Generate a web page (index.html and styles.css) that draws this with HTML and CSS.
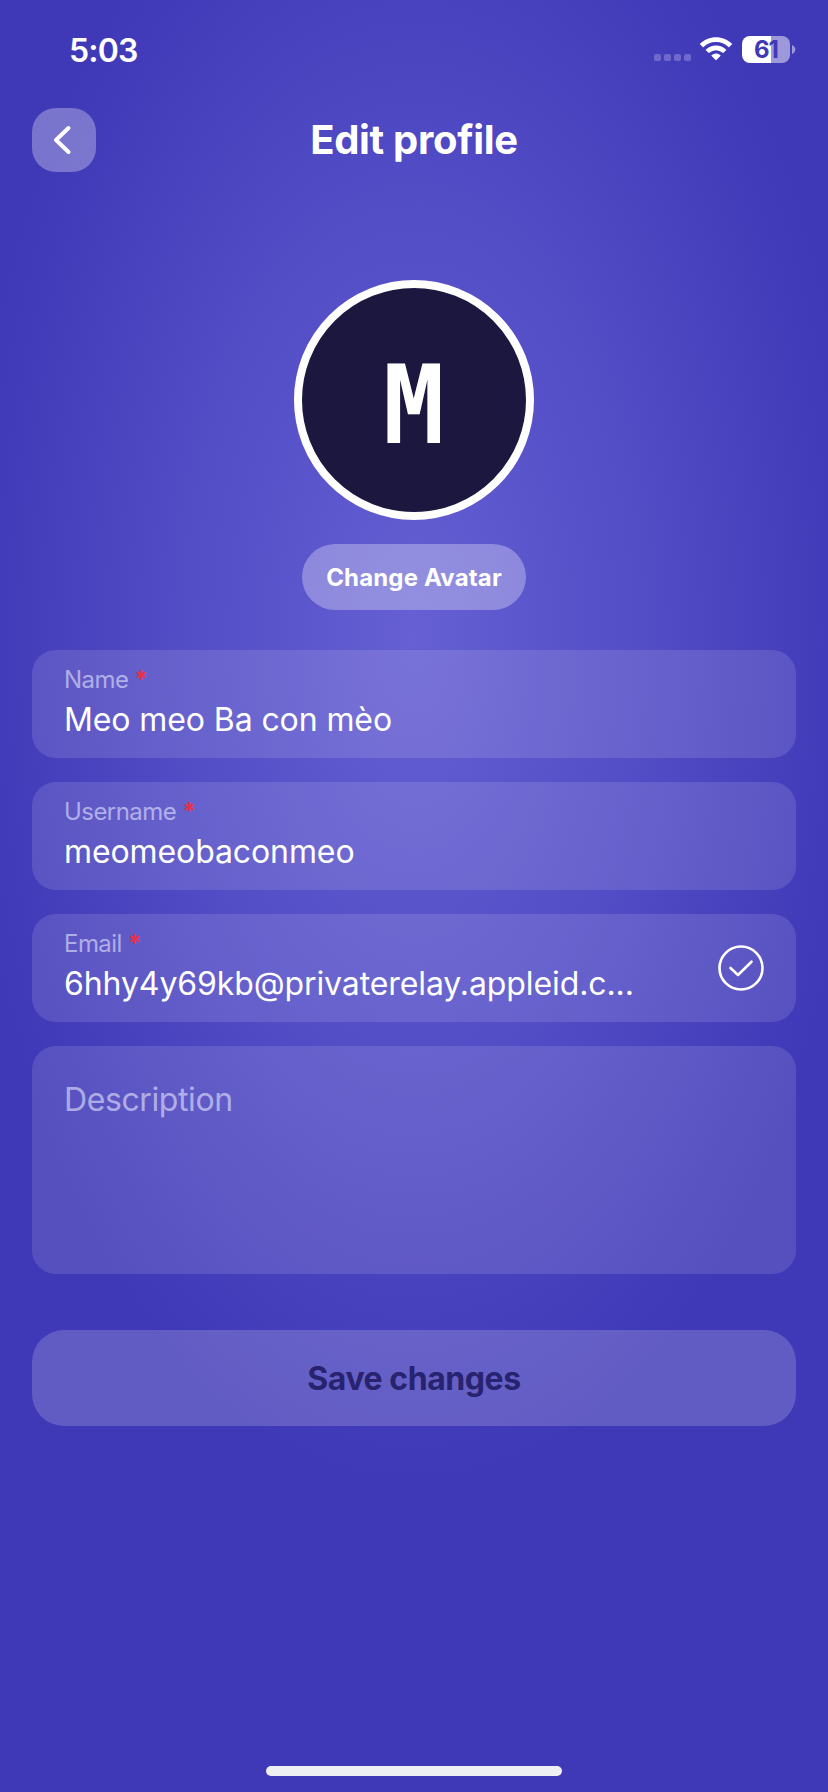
FILE: index.html
```html
<!DOCTYPE html>
<html lang="en">
<head>
<meta charset="utf-8">
<title>Edit profile</title>
<link rel="stylesheet" href="styles.css">
</head>
<body>
<div class="screen">
  <div class="status">
    <div class="time">5:03</div>
    <div class="status-icons">
      <div class="cell"><i></i><i></i><i></i><i></i></div>
      <svg class="wifi" width="32" height="24" viewBox="0 0 32 24">
        <path fill="#fff" d="M16 .3c6 0 11.600 2.300 15.800 6.300.2.3.2.6 0 .9l-2.500 2.400c-.2.3-.6.3-.9 0A18 18 0 0 0 16 5.100 18 18 0 0 0 3.600 9.900c-.3.3-.7.3-.9 0L.2 7.500a.6.6 0 0 1 0-.9C4.400 2.600 10 .3 16 .3Z"/>
        <path fill="#fff" d="M16 8.500c3.900 0 7.400 1.500 10 3.900.3.300.3.600 0 .9l-2.500 2.500c-.2.200-.6.200-.9 0A10 10 0 0 0 16 13.300a10 10 0 0 0-6.600 2.500c-.3.200-.6.200-.9 0L6 13.300a.6.6 0 0 1 0-.9 14.600 14.600 0 0 1 10-3.900Z"/>
        <path fill="#fff" d="M16 16.600c1.700 0 3.200.6 4.400 1.600.3.200.3.600 0 .9l-4 4c-.2.300-.6.300-.8 0l-4-4c-.3-.3-.3-.7 0-.9a6.700 6.700 0 0 1 4.400-1.600Z"/>
      </svg>
      <div class="battery"><span>61</span></div>
      <svg class="nub" width="4" height="9" viewBox="0 0 4 9"><path fill="#9c98d9" d="M0 0c2 .6 3.300 2.400 3.300 4.500S2 8.400 0 9Z"/></svg>
    </div>
  </div>
  <header class="header">
    <button class="back" aria-label="Back">
      <svg width="64" height="64" viewBox="0 0 64 64" fill="none" stroke="#fff" stroke-width="4" stroke-linecap="round" stroke-linejoin="round"><path d="M36.500 20 24 32l12.500 12"/></svg>
    </button>
    <h1 class="title">Edit profile</h1>
  </header>
  <main class="content">
    <div class="avatar"><span>M</span></div>
    <button class="change">Change Avatar</button>
    <div class="field">
      <div class="label">Name <b>*</b></div>
      <div class="value">Meo meo Ba con mèo</div>
    </div>
    <div class="field">
      <div class="label">Username <b>*</b></div>
      <div class="value">meomeobaconmeo</div>
    </div>
    <div class="field with-icon">
      <div>
        <div class="label">Email <b>*</b></div>
        <div class="value">6hhy4y69kb@privaterelay.appleid.c...</div>
      </div>
      <svg class="check" width="46" height="46" viewBox="0 0 46 46" fill="none" stroke="#fff" stroke-width="2.600" stroke-linecap="round" stroke-linejoin="round"><circle cx="23" cy="23" r="21.500"/><path d="m12.500 23 7.500 7 13.500-13.300"/></svg>
    </div>
    <div class="field area"><div class="placeholder">Description</div></div>
    <button class="save">Save changes</button>
  </main>
  <div class="home"></div>
</div>
</body>
</html>
```
FILE: styles.css
```css
* { box-sizing: border-box; }
body { margin: 0; font-family: Inter, "Liberation Sans", sans-serif; color: #fff; }
button { border: 0; padding: 0; margin: 0; font: inherit; color: inherit; }
.screen {
  width: 828px; height: 1792px; display: flex; flex-direction: column; overflow: hidden;
  background: radial-gradient(ellipse 455px 850px at 414px 640px, #6660d4 0%, #534dc6 50%, #3f38b7 100%);
}
.status { height: 100px; padding: 0 33px 0 69px; display: flex; justify-content: space-between; align-items: center; }
.time { font-size: 32px; font-weight: 600; line-height: 40px; letter-spacing: -.8px; padding-top: 1px; }
.status-icons { display: flex; align-items: center; margin: -2px -1px 0 0; }
.cell { display: flex; gap: 3px; margin: 16px 9px 0 0; }
.cell i { width: 7px; height: 7px; border-radius: 2px; background: #6f69cb; }
.battery {
  width: 48px; height: 27px; margin: 0 2px 0 10px; border-radius: 8px;
  background: linear-gradient(90deg, #fff 29px, #9c98d9 29px);
  color: #4039b7; font-size: 24px; font-weight: 700; line-height: 27px; text-align: center; letter-spacing: -1px;
}
.header { height: 80px; padding: 0 32px; display: grid; grid-template-columns: 64px 1fr 64px; align-items: center; }
.back { width: 64px; height: 64px; border-radius: 24px; background: rgba(255,255,255,.3); }
.back svg { display: block; }
.title { margin: 0; font-size: 40px; line-height: 48px; font-weight: 700; text-align: center; letter-spacing: -.3px; }
.content { padding: 100px 32px 0; display: flex; flex-direction: column; align-items: center; }
.avatar {
  width: 240px; height: 240px; border: 8px solid #fff; border-radius: 50%; background: #1b173e;
  display: flex; align-items: center; justify-content: center;
  font: 700 109px/1 "DejaVu Sans Mono", monospace;
}
.avatar span { padding-top: 10px; transform: scaleX(.93); }
.change { width: 224px; height: 66px; margin: 24px 0 40px; border-radius: 33px; background: rgba(255,255,255,.3); font-size: 24px; font-weight: 700; letter-spacing: .15px; }
.field { width: 764px; height: 108px; margin-bottom: 24px; padding: 15px 32px 0; border-radius: 24px; background: rgba(255,255,255,.12); }
.with-icon { display: flex; justify-content: space-between; }
.check { margin-top: 16px; }
.label { font-size: 24px; line-height: 30px; font-weight: 400; color: rgba(232,232,255,.6); letter-spacing: -.55px; }
.label b { color: #e8304a; font-weight: 700; }
.value { font-size: 32px; line-height: 40px; margin-top: 5px; font-weight: 400; white-space: nowrap; letter-spacing: -.1px; }
.area { height: 228px; padding-top: 34px; margin-bottom: 56px; }
.placeholder { font-size: 32px; line-height: 40px; font-weight: 400; color: rgba(232,232,255,.6); letter-spacing: -.4px; }
.save { width: 764px; height: 96px; border-radius: 32px; background: rgba(255,255,255,.18); color: #28236f; font-size: 32px; font-weight: 700; letter-spacing: -.45px; }
.home { width: 296px; height: 10px; margin: auto auto 16px; border-radius: 5px; background: #eeeff2; }
```
